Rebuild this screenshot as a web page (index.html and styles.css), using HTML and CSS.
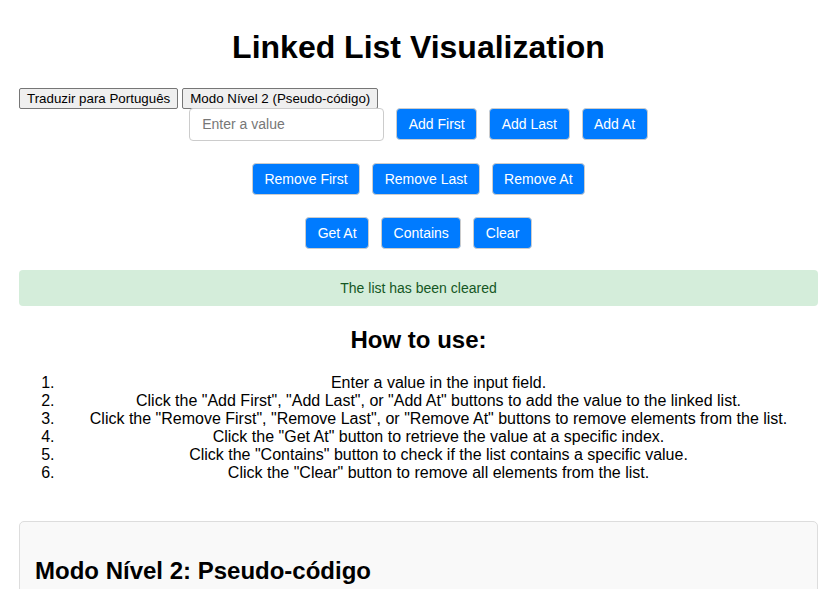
FILE: index.html
```html
<!DOCTYPE html>
<html lang="en">
<head>
<meta charset="UTF-8">
<title>Linked List Visualization</title>
<link rel="stylesheet" href="styles.css">
</head>
<body>
<h1 class="title">Linked List Visualization</h1>
<div class="toolbar">
  <button class="plain-btn">Traduzir para Português</button>
  <button class="plain-btn">Modo Nível 2 (Pseudo-código)</button>
</div>
<div class="controls">
  <div class="row">
    <input class="value-input" type="text" placeholder="Enter a value">
    <button class="btn">Add First</button>
    <button class="btn">Add Last</button>
    <button class="btn">Add At</button>
  </div>
  <div class="row">
    <button class="btn">Remove First</button>
    <button class="btn">Remove Last</button>
    <button class="btn">Remove At</button>
  </div>
  <div class="row">
    <button class="btn">Get At</button>
    <button class="btn">Contains</button>
    <button class="btn">Clear</button>
  </div>
</div>
<div class="message">The list has been cleared</div>
<h2 class="section-title">How to use:</h2>
<ol class="steps">
  <li>Enter a value in the input field.</li>
  <li>Click the "Add First", "Add Last", or "Add At" buttons to add the value to the linked list.</li>
  <li>Click the "Remove First", "Remove Last", or "Remove At" buttons to remove elements from the list.</li>
  <li>Click the "Get At" button to retrieve the value at a specific index.</li>
  <li>Click the "Contains" button to check if the list contains a specific value.</li>
  <li>Click the "Clear" button to remove all elements from the list.</li>
</ol>
<div class="card">
  <h2 class="card-title">Modo Nível 2: Pseudo-código</h2>
</div>
</body>
</html>
```
FILE: styles.css
```css
html, body {
  margin: 0;
}
body {
  padding: 8px 19px 0;
  font-family: "Liberation Sans", Arial, sans-serif;
  font-size: 16px;
  color: #000;
  text-align: center;
  background: #fff;
}
.title {
  font-size: 32px;
  font-weight: bold;
  margin: 21.44px 0;
}
.toolbar {
  display: flex;
  gap: 4px;
  text-align: left;
}
.plain-btn {
  font-family: "Liberation Sans", Arial, sans-serif;
  font-size: 13.333px;
  padding: 1px 7px;
  border: 1px solid #767676;
  border-radius: 2px;
  background: #efefef;
  color: #000;
  height: 21px;
  line-height: 15px;
}
.controls {
  margin-top: -1px;
}
.row {
  display: flex;
  justify-content: center;
  align-items: center;
  gap: 12px;
  margin-bottom: 22px;
}
.row:last-child {
  margin-bottom: 21px;
}
.value-input {
  width: 195px;
  height: 33px;
  box-sizing: border-box;
  padding: 8px 12px;
  border: 1px solid #ccc;
  border-radius: 4px;
  font-family: "Liberation Sans", Arial, sans-serif;
  font-size: 14px;
  color: #333;
}
.value-input::placeholder {
  color: #777;
}
.btn {
  font-family: "Liberation Sans", Arial, sans-serif;
  font-size: 14px;
  line-height: 16px;
  padding: 7px 11.5px;
  border: 1px solid #ccc;
  border-radius: 4px;
  background: #007bff;
  color: #fff;
}
.message {
  background: #d4edda;
  color: #155724;
  border-radius: 4px;
  font-size: 14px;
  line-height: 16px;
  padding: 10px;
  margin-top: 0;
}
.section-title {
  font-size: 24px;
  font-weight: bold;
  margin: 19.92px 0;
}
.steps {
  margin: 16px 0;
  padding-left: 40px;
}
.card {
  margin-top: 39px;
  background: #f9f9f9;
  border: 1px solid #ddd;
  border-radius: 5px;
  padding: 15px;
  text-align: left;
}
.card-title {
  font-size: 24px;
  font-weight: bold;
  margin: 19.92px 0;
}
```
